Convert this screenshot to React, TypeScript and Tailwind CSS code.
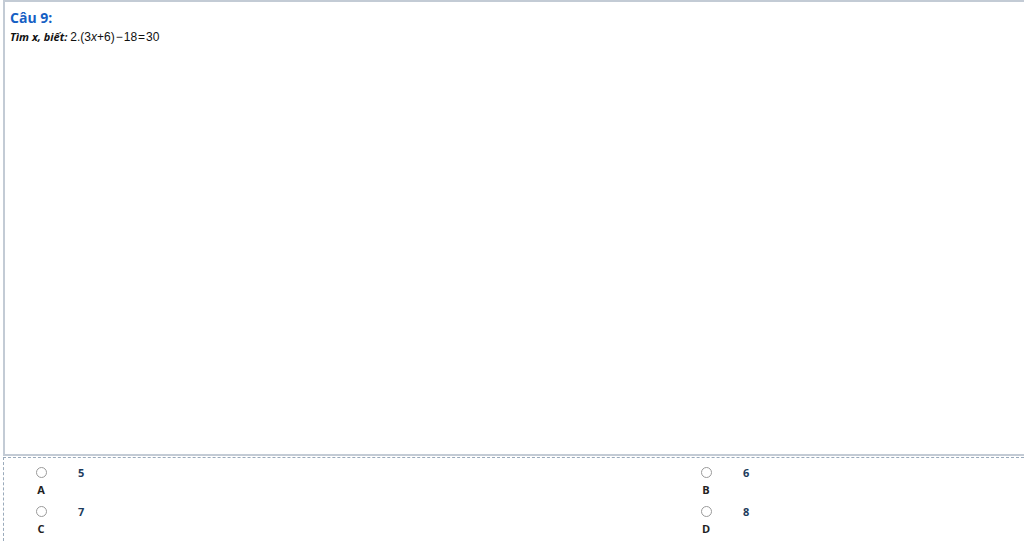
const options = [
  { letter: "A", value: "5" },
  { letter: "B", value: "6" },
  { letter: "C", value: "7" },
  { letter: "D", value: "8" },
];

const Option = ({ letter, value }: { letter: string; value: string }) => {
  return (
    <div className="flex items-start">
      <div className="flex w-[18px] flex-col items-center">
        <span className="mt-[1px] h-[11px] w-[11px] rounded-full border border-[#9a9a9a] bg-white" />
        <span className="mt-[5px] text-[11px] font-bold leading-[14px] text-[#222]">{letter}</span>
      </div>
      <span className="ml-[28px] text-[11px] font-bold leading-[14px] text-[#1d3b5c]">{value}</span>
    </div>
  );
};

export default function App() {
  return (
    <div className="h-[541px] w-[1024px] overflow-hidden bg-white" style={{ fontFamily: '"Open Sans", "DejaVu Sans", sans-serif' }}>
      <div className="ml-[3px] h-[456px] border-2 border-r-0 border-[#c3cbd5] bg-white px-[5px] pt-[6px]">
        <h2 className="text-[14px] font-bold leading-[20px] text-[#1560c4]">Câu 9:</h2>
        <p className="mt-[1px] flex items-center text-[11px] leading-[16px] text-[#111]">
          <strong className="italic">Tìm x, biết:</strong>
          <span className="ml-[3px] text-[12px]" style={{ fontFamily: '"Liberation Sans", Arial, sans-serif' }}>
            2.(3<span className="italic">x</span>+6)<span className="mx-[1px]">−</span>18<span className="mx-[1px]">=</span>30
          </span>
        </p>
      </div>
      <div className="ml-[3px] mt-[1px] h-[84px] border-l border-t border-dashed border-[#9aaabb] pt-[8px]">
        <div className="grid grid-cols-[665px_1fr] gap-y-[8px] pl-[28px]">
          {options.map((o) => (
            <Option key={o.letter} letter={o.letter} value={o.value} />
          ))}
        </div>
      </div>
    </div>
  );
}
